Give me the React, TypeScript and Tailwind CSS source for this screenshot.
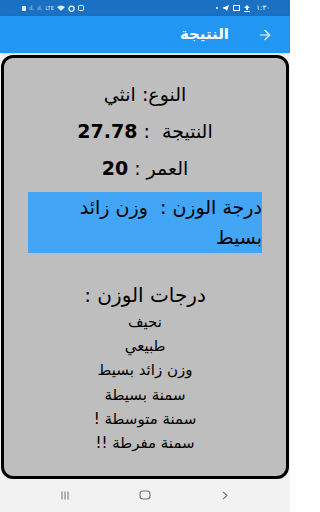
import { ArrowRight } from 'lucide-react'

const font = { fontFamily: '"DejaVu Sans", "Noto Sans", sans-serif' }

const grades = ['نحيف', 'طبيعي', 'وزن زائد بسيط', 'سمنة بسيطة', 'سمنة متوسطة !', 'سمنة مفرطة !!']

function StatusBar() {
  return (
    <div dir="ltr" className="h-[16px] bg-[#1a70c2] flex items-center justify-between pl-[22px] pr-[20px] text-white">
      <div className="flex items-center gap-[3px]">
        <span className="w-[4px] h-[5px] bg-white/90 rounded-[1px]" />
        <span className="text-[6px] leading-none opacity-70">ıl.</span>
        <span className="text-[6px] leading-none opacity-70">ıl.</span>
        <span className="text-[5px] leading-none opacity-80">LTE</span>
        <svg width="8" height="6" viewBox="0 0 8 6"><path d="M0 2 Q4 -1 8 2 L4 6 Z" fill="white" opacity="0.85" /></svg>
        <svg width="7" height="7" viewBox="0 0 7 7"><circle cx="3.5" cy="3.8" r="2.6" fill="none" stroke="white" strokeWidth="1.2" /></svg>
        <svg width="6" height="6" viewBox="0 0 6 6"><rect x="0.5" y="0.5" width="5" height="5" rx="1" fill="none" stroke="white" strokeWidth="1" /></svg>
      </div>
      <div className="flex items-center gap-[4px]">
        <span className="w-[2px] h-[2px] rounded-full bg-white" />
        <svg width="7" height="6" viewBox="0 0 7 6"><path d="M0 3 L7 0 L5 6 L3 4 Z" fill="white" /></svg>
        <svg width="7" height="6" viewBox="0 0 7 6"><rect x="0.5" y="0.5" width="6" height="5" fill="none" stroke="white" strokeWidth="1" /></svg>
        <svg width="6" height="7" viewBox="0 0 6 7"><path d="M3 0 L6 3 H4 V5 H2 V3 H0 Z M0 6 H6 V7 H0 Z" fill="white" /></svg>
        <span className="text-[7px] leading-none ml-[2px]" style={font}>١:٣٠</span>
      </div>
    </div>
  )
}

export default function App() {
  return (
    <div dir="rtl" className="w-[290px] h-[512px] bg-[#f2f2f2] flex flex-col overflow-hidden" style={font}>
      <StatusBar />
      <div className="h-[37px] bg-[#2196f3] flex items-center text-white shadow-sm">
        <ArrowRight size={16} strokeWidth={1.8} className="mr-[17px] ml-[28px]" />
        <span className="text-[15px] font-bold">النتيجة</span>
      </div>

      <div className="mt-[2px] mx-[1px] h-[424px] border-[3px] border-black rounded-[12px] bg-[#bebebe] flex flex-col items-center text-black">
        <p className="mt-[24px] text-[19px] leading-[24px]">النوع: انثي</p>
        <p className="mt-[13px] text-[19px] leading-[24px]">
          النتيجة &nbsp;: <b className="font-bold">27.78</b>
        </p>
        <p className="mt-[13px] text-[19px] leading-[24px]">
          العمر : <b className="font-bold">20</b>
        </p>
        <div className="mt-[12px] w-[234px] h-[61px] bg-[#42a5f5] text-[19px] leading-[30px] text-right">
          درجة الوزن :&nbsp; وزن زائد
          <br />
          بسيط
        </div>
        <p className="mt-[30px] text-[20px] leading-[24px]">درجات الوزن :</p>
        <div className="mt-[3px] flex flex-col items-center text-[15px] leading-[24.2px]">
          {grades.map((g) => (
            <span key={g}>{g}</span>
          ))}
        </div>
      </div>

      <div dir="ltr" className="flex-1 flex items-center justify-center pb-[1px] text-[#707070]">
        <div className="w-[80px] flex justify-center">
          <svg width="8" height="9" viewBox="0 0 8 9"><path d="M1 0.5 V8.5 M4 0.5 V8.5 M7 0.5 V8.5" stroke="currentColor" strokeWidth="1" /></svg>
        </div>
        <div className="w-[80px] flex justify-center">
          <svg width="12" height="10" viewBox="0 0 12 10"><rect x="1" y="1" width="10" height="8" rx="3" fill="none" stroke="currentColor" strokeWidth="1.1" /></svg>
        </div>
        <div className="w-[80px] flex justify-center">
          <svg width="6" height="9" viewBox="0 0 6 9"><path d="M1 0.8 L5 4.5 L1 8.2" fill="none" stroke="currentColor" strokeWidth="1.1" /></svg>
        </div>
      </div>
    </div>
  )
}
